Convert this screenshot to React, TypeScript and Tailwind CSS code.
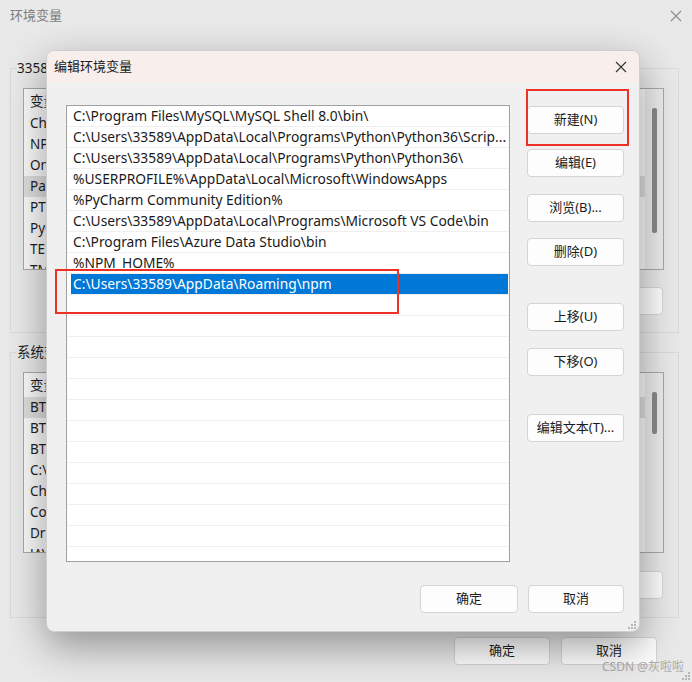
import React from 'react';

const paths = [
    'C:\\Program Files\\MySQL\\MySQL Shell 8.0\\bin\\',
    'C:\\Users\\33589\\AppData\\Local\\Programs\\Python\\Python36\\Scrip...',
    'C:\\Users\\33589\\AppData\\Local\\Programs\\Python\\Python36\\',
    '%USERPROFILE%\\AppData\\Local\\Microsoft\\WindowsApps',
    '%PyCharm Community Edition%',
    'C:\\Users\\33589\\AppData\\Local\\Programs\\Microsoft VS Code\\bin',
    'C:\\Program Files\\Azure Data Studio\\bin',
    '%NPM_HOME%',
    'C:\\Users\\33589\\AppData\\Roaming\\npm',
];
const selectedIndex = 8;
const totalRows = 22;

const userVars = ['ChocolateyLastPathUpdate', 'NPM_HOME', 'OneDrive', 'Path', 'PT8HOME', 'PyCharm Community Edition', 'TEMP', 'TMP'];
const systemVars = ['BTBASE', 'BTFS', 'BTTS', 'C:\\Program Files', 'ChocolateyInstall', 'ComSpec', 'DriverData', 'JAVA_HOME'];

function CloseIcon({ className = '' }: { className?: string }) {
    return (
        <svg width="12" height="12" viewBox="0 0 12 12" className={className}>
            <path d="M1 1 L11 11 M11 1 L1 11" stroke="currentColor" strokeWidth="1.1" fill="none" />
        </svg>
    );
}

function Grip() {
    return (
        <svg width="9" height="9" viewBox="0 0 9 9">
            <rect x="7" y="1" width="2" height="2" fill="#b5b5b5" />
            <rect x="4" y="4" width="2" height="2" fill="#b5b5b5" />
            <rect x="7" y="4" width="2" height="2" fill="#b5b5b5" />
            <rect x="1" y="7" width="2" height="2" fill="#b5b5b5" />
            <rect x="4" y="7" width="2" height="2" fill="#b5b5b5" />
            <rect x="7" y="7" width="2" height="2" fill="#b5b5b5" />
        </svg>
    );
}

type BtnProps = { label: string; className?: string };

function WinButton({ label, className = '' }: BtnProps) {
    return (
        <button
            className={`flex h-[28px] shrink-0 items-center justify-center rounded-[4px] border border-[#d4d4d4] bg-[#fdfdfd] text-[13px] text-[#1b1b1b] ${className}`}
        >
            {label}
        </button>
    );
}

// list inside the dimmed parent window
function BgList({ rows, height, thumbHeight, highlight }: { rows: string[]; height: string; thumbHeight: string; highlight: number }) {
    return (
        <div className={`flex ${height} border border-[#a9a9a9] bg-[#fafafa]`}>
            <div className="flex flex-1 flex-col overflow-hidden">
                <div className="flex h-[24px] shrink-0 items-center pl-[6px] text-[13.5px]">
                    <span className="w-[200px]">变量</span>
                    <span>值</span>
                </div>
                {rows.map((r, i) => (
                    <div
                        key={i}
                        className={`flex h-[21px] shrink-0 items-center pl-[6px] text-[13.5px] ${i === highlight ? 'bg-[#dedede]' : ''}`}
                    >
                        <span className="w-[200px] whitespace-nowrap">{r}</span>
                    </div>
                ))}
            </div>
            <div className="flex w-[18px] justify-center bg-[#ececec] pt-[19px]">
                <div className={`w-[5px] rounded-[2px] bg-[#8a8a8a] ${thumbHeight}`} />
            </div>
        </div>
    );
}

export default function App() {
    return (
        <div className="relative h-[682px] w-[692px] overflow-hidden bg-[#e9e9e9] font-['Noto_Sans','Noto_Sans_CJK_SC',sans-serif] text-[#1f1f1f]">
            {/* Parent window: 环境变量 */}
            <div className="flex h-full flex-col">
                <div className="flex h-[32px] shrink-0 items-center justify-between pl-[10px] pr-[10px]">
                    <span className="text-[13px] text-[#7d7d7d]">环境变量</span>
                    <CloseIcon className="text-[#8c8c8c]" />
                </div>

                <div className="flex flex-col pl-[10px] pr-[13px] pt-[27px]">
                    <fieldset className="border border-[#dadada]">
                        <legend className="ml-[5px] px-[1px] text-[13.5px] leading-[18px]">33589 的用户变量(U)</legend>
                        <div className="flex flex-col pl-[12px] pr-[14px] pt-[11px] pb-[17px]">
                            <BgList rows={userVars} height="h-[182px]" thumbHeight="h-[125px]" highlight={3} />
                            <div className="mt-[17px] flex justify-end gap-[10px] pr-[1px]">
                                <WinButton label="新建(N)..." className="w-[90px] bg-[#efefef]" />
                                <WinButton label="编辑(E)..." className="w-[90px] bg-[#efefef]" />
                                <WinButton label="删除(D)" className="w-[90px] bg-[#efefef]" />
                            </div>
                        </div>
                    </fieldset>

                    <fieldset className="mt-[10px] border border-[#dadada]">
                        <legend className="ml-[5px] px-[1px] text-[13.5px] leading-[18px]">系统变量(S)</legend>
                        <div className="flex flex-col pl-[12px] pr-[14px] pt-[11px] pb-[18px]">
                            <BgList rows={systemVars} height="h-[181px]" thumbHeight="h-[42px]" highlight={0} />
                            <div className="mt-[18px] flex justify-end gap-[10px] pr-[1px]">
                                <WinButton label="新建(W)..." className="w-[90px] bg-[#efefef]" />
                                <WinButton label="编辑(I)..." className="w-[90px] bg-[#efefef]" />
                                <WinButton label="删除(L)" className="w-[90px] bg-[#efefef]" />
                            </div>
                        </div>
                    </fieldset>

                    <div className="mt-[19px] flex justify-end gap-[11px] pr-[22px]">
                        <WinButton label="确定" className="w-[96px] border-[#cdcdcd] bg-[#e4e4e4]" />
                        <WinButton label="取消" className="w-[96px] border-[#cdcdcd] bg-[#e4e4e4]" />
                    </div>
                </div>
            </div>

            {/* watermark + grip */}
            <div className="absolute bottom-[6px] right-[8px] text-[12px] text-[#ababab]">CSDN @灰啦啦</div>
            <div className="absolute bottom-[2px] right-[2px]">
                <Grip />
            </div>

            {/* Modal dialog: 编辑环境变量 */}
            <div className="absolute left-[46px] top-[50px] flex h-[582px] w-[594px] flex-col overflow-hidden rounded-[8px] border border-[#cfcfcf] bg-[#f0f0f0] shadow-[0_14px_40px_rgba(0,0,0,0.38)]">
                <div className="flex h-[31px] shrink-0 items-center justify-between bg-[#f8efed] pl-[7px] pr-[12px]">
                    <span className="text-[13px] text-[#1a1a1a]">编辑环境变量</span>
                    <CloseIcon className="text-[#333333]" />
                </div>

                <div className="flex flex-1 flex-col pl-[19px] pr-[15px] pt-[23px] pb-[18px]">
                    <div className="flex gap-[17px]">
                        {/* path list */}
                        <div className="flex h-[457px] w-[444px] flex-col overflow-hidden border border-[#a0a0a0] bg-white">
                            {Array.from({ length: totalRows }).map((_, i) => {
                                const text = paths[i] ?? '';
                                const selected = i === selectedIndex;
                                return (
                                    <div key={i} className="flex h-[21px] shrink-0 border-b border-[#efefef] pl-[4px] pr-[1px]">
                                        <div
                                            className={`flex flex-1 items-center overflow-hidden whitespace-nowrap pl-[2px] pt-[1px] text-[13.8px] ${
                                                selected ? 'bg-[#0078d7] text-white' : 'text-[#1a1a1a]'
                                            }`}
                                        >
                                            {text}
                                        </div>
                                    </div>
                                );
                            })}
                        </div>

                        {/* action buttons */}
                        <div className="flex w-[97px] flex-col">
                            <WinButton label="新建(N)" className="mt-[1px]" />
                            <WinButton label="编辑(E)" className="mt-[15px]" />
                            <WinButton label="浏览(B)..." className="mt-[17px]" />
                            <WinButton label="删除(D)" className="mt-[16px]" />
                            <WinButton label="上移(U)" className="mt-[37px]" />
                            <WinButton label="下移(O)" className="mt-[17px]" />
                            <WinButton label="编辑文本(T)..." className="mt-[38px]" />
                        </div>
                    </div>

                    <div className="mt-[23px] flex justify-end gap-[10px]">
                        <WinButton label="确定" className="w-[98px] border-[#3b86d4]" />
                        <WinButton label="取消" className="w-[96px]" />
                    </div>
                </div>

                <div className="absolute bottom-[2px] right-[3px]">
                    <Grip />
                </div>

                {/* red annotation boxes */}
                <div className="pointer-events-none absolute left-[479px] top-[38px] h-[57px] w-[103px] border-2 border-[#ee3124]" />
                <div className="pointer-events-none absolute left-[8px] top-[218px] h-[45px] w-[344px] border-2 border-[#ee3124]" />
            </div>
        </div>
    );
}
